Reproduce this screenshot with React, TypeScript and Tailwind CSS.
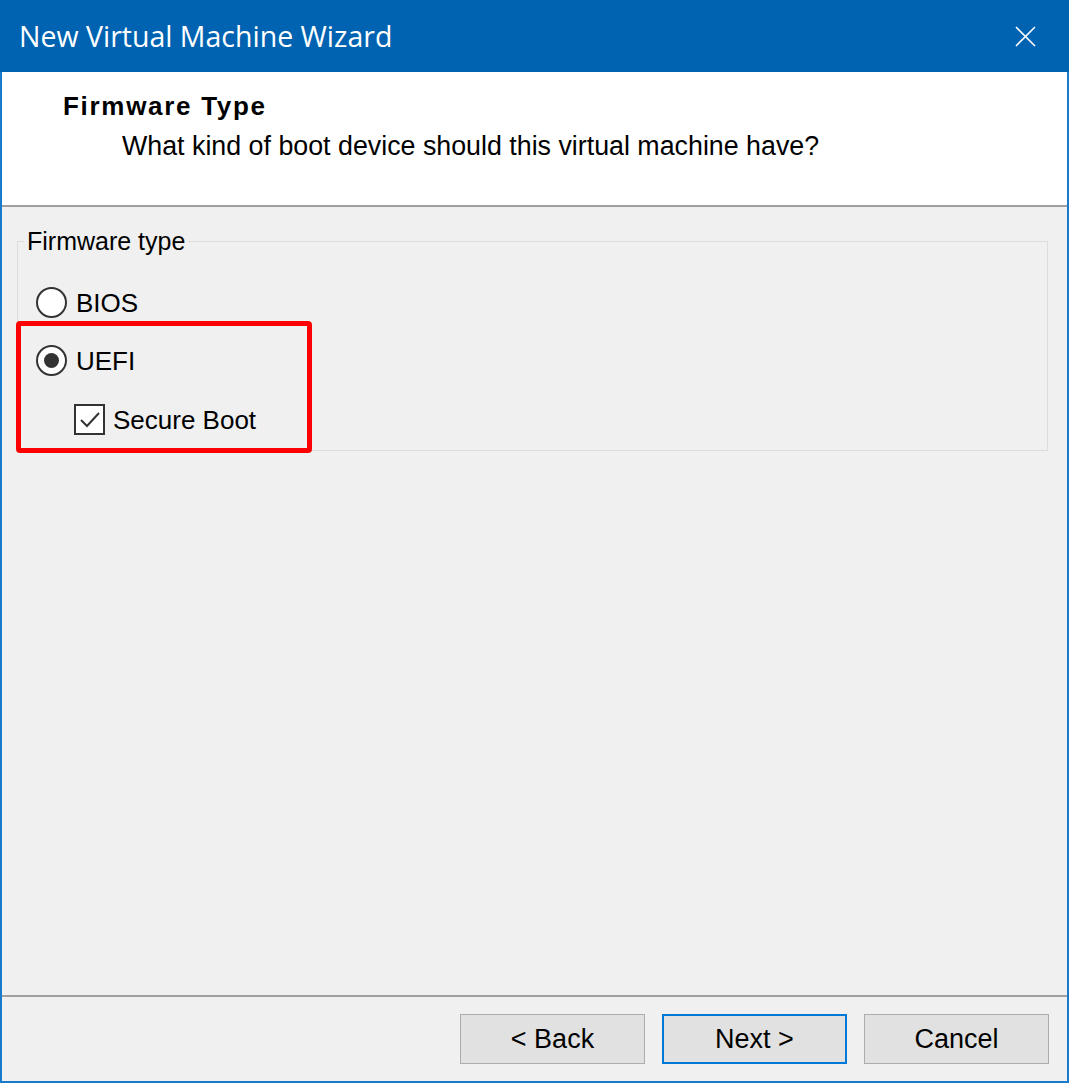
const ui = "font-['Liberation_Sans',Arial,sans-serif]";

function Radio({ checked, label }: { checked?: boolean; label: string }) {
  return (
    <label className="flex items-center gap-[9px]">
      <span className="flex h-[31px] w-[31px] items-center justify-center rounded-full border-2 border-[#333333] bg-white">
        {checked && <span className="h-[15px] w-[15px] rounded-full bg-[#333333]" />}
      </span>
      <span className="text-[26px] leading-none text-black">{label}</span>
    </label>
  );
}

function Checkbox({ label }: { label: string }) {
  return (
    <label className="flex items-center gap-[8px]">
      <span className="flex h-[31px] w-[31px] items-center justify-center border-2 border-[#333333] bg-white">
        <svg width="22" height="18" viewBox="0 0 22 18" fill="none">
          <path d="M2 9 L8 15 L20 2" stroke="#333333" strokeWidth="2" />
        </svg>
      </span>
      <span className="text-[26px] leading-none text-black">{label}</span>
    </label>
  );
}

function Button({ label, focused }: { label: string; focused?: boolean }) {
  return (
    <button
      className={`h-[50px] w-[185px] bg-[#e1e1e1] text-[27px] text-black ${
        focused ? "border-2 border-[#0078d7]" : "border border-[#adadad]"
      }`}
    >
      {label}
    </button>
  );
}

export default function App() {
  return (
    <div className={`flex h-[1083px] w-[1069px] flex-col border-2 border-t-0 border-[#1979ca] bg-[#f0f0f0] ${ui}`}>
      {/* title bar */}
      <div className="-mx-[2px] flex h-[72px] shrink-0 items-center justify-between bg-[#0063b1] pl-[19px] pr-[33px]">
        <span className="font-['Open_Sans',sans-serif] text-[28.5px] text-white">New Virtual Machine Wizard</span>
        <svg width="21" height="21" viewBox="0 0 21 21" fill="none" className="mt-[1px]">
          <path d="M1 1 L20 20 M20 1 L1 20" stroke="white" strokeWidth="1.6" />
        </svg>
      </div>

      {/* page header */}
      <div className="flex h-[135px] shrink-0 flex-col border-b-2 border-[#a0a0a0] bg-white pl-[61px] pt-[21px]">
        <h1 className="text-[26px] font-bold leading-none tracking-[1.7px] text-black">Firmware Type</h1>
        <p className="mt-[14px] pl-[59px] text-[26.8px] leading-none text-black">
          What kind of boot device should this virtual machine have?
        </p>
      </div>

      {/* body */}
      <div className="flex-1 px-[15px] pt-[25px]">
        <fieldset className="relative h-[219px] w-[1031px] border border-[#dcdcdc]">
          <legend className="ml-[6px] px-[3px] text-[25px] leading-[19px] text-black">Firmware type</legend>
          <div className="flex flex-col pl-[18px] pt-[36px]">
            <Radio label="BIOS" />
            <div className="mt-[27px]">
              <Radio checked label="UEFI" />
            </div>
            <div className="mt-[28px] pl-[38px]">
              <Checkbox label="Secure Boot" />
            </div>
          </div>
          <div className="absolute left-[-2px] top-[70px] h-[132px] w-[296px] rounded-[4px] border-[5px] border-[#ff0000]" />
        </fieldset>
      </div>

      {/* footer */}
      <div className="flex h-[86px] shrink-0 items-start justify-end gap-[17px] border-t-2 border-[#a0a0a0] pr-[18px] pt-[17px]">
        <Button label="< Back" />
        <Button label="Next >" focused />
        <Button label="Cancel" />
      </div>
    </div>
  );
}
